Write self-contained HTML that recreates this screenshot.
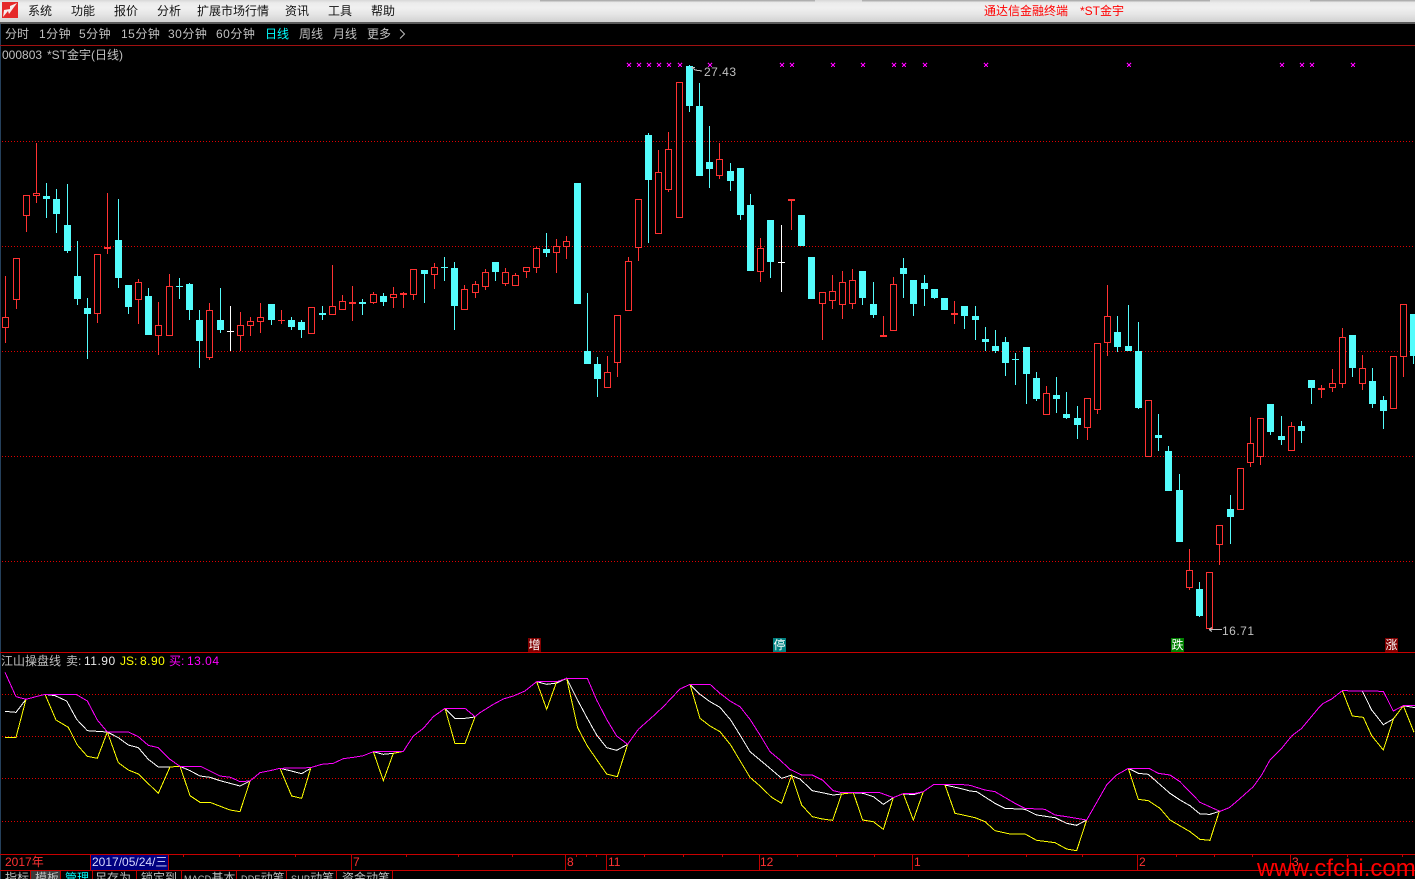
<!DOCTYPE html>
<html lang="zh">
<head>
<meta charset="utf-8">
<title>通达信金融终端 *ST金宇</title>
<style>
html,body{margin:0;padding:0;background:#000;}
#r{position:relative;width:1415px;height:879px;overflow:hidden;background:#000;font:12px/14px "Liberation Sans","WenQuanYi Zen Hei","Noto Sans CJK SC",sans-serif;color:#c0c0c0;}
#r span,#r div{position:absolute;white-space:nowrap;}
#r small{font-size:9px;letter-spacing:.2px;}
#bar{left:0;top:0;width:1415px;height:22px;background:linear-gradient(#d8d8d8 0,#ececec 3px,#f0f0f0 8px,#e6e6e6 14px,#d4d4d4 21px);border-bottom:2px solid #5a5a5a;color:#111;}
#bar span{top:4px;}
.sh{top:0;height:2px;background:linear-gradient(#a0a0a0,#dcdcdc);}
.t{top:27px;}
.n{letter-spacing:.5px;}
.b{top:871px;}
.d{top:855px;color:#ff3232;}
.g{top:638px;width:13px;height:14px;color:#fff;text-align:center;line-height:14px;}
svg{position:absolute;left:0;top:0;}
</style>
</head>
<body>
<div id="r">
<svg width="1415" height="879" viewBox="0 0 1415 879" shape-rendering="crispEdges" fill="none">
<path d="M.5 24V879" stroke="#25405c"/>
<path d="M0 45.5H1415" stroke="#a01010"/>
<path d="M0 652.5H1415M0 854.5H1415M0 870.5H1415" stroke="#c80000"/>
<path d="M2 141.5H1415M2 246.5H1415M2 351.5H1415M2 456.5H1415M2 561.5H1415M2 694.5H1415M2 736.5H1415M2 778.5H1415M2 821.5H1415" stroke="#e00000" stroke-dasharray="1 2"/>

<path stroke="#ff3232" d="M5.5 276V343M16.5 258V309M26.5 195V232M36.5 143V203M97.5 254V323M107.5 193V254M138.5 279V324M158.5 302V355M169.5 274V336M209.5 303V360M240.5 312V351M250.5 317V336M260.5 303V333M281.5 310V324M311.5 307V334M332.5 265V315M342.5 295V310M352.5 286V321M373.5 292V304M393.5 287V308M403.5 292V308M413.5 269V300M434.5 263V289M464.5 285V310M475.5 281V298M485.5 269V290M505.5 268V286M515.5 273V286M526.5 267V278M536.5 247V273M556.5 239V273M566.5 236V259M607.5 356V388M617.5 315V377M628.5 257V311M638.5 199V261M658.5 150V234M668.5 132V192M679.5 82V218M719.5 143V179M760.5 238V282M791.5 200V230M822.5 292V340M832.5 275V309M842.5 271V319M852.5 269V309M883.5 316V337M893.5 277V331M954.5 301V324M1046.5 386V415M1087.5 398V440M1097.5 343V414M1107.5 285V356M1148.5 400V457M1189.5 549V590M1209.5 572V629M1219.5 525V565M1240.5 468V510M1250.5 417V467M1260.5 418V465M1291.5 422V451M1321.5 385V398M1332.5 369V392M1342.5 328V388M1362.5 355V390M1393.5 356V409M1403.5 304V377"/>
<path stroke="#ff3232" stroke-width="7" d="M5.5 317V328M16.5 258V300M26.5 195V216M36.5 193V196M97.5 254V314M138.5 282V300M158.5 325V336M169.5 286V336M209.5 310V358M240.5 325V336M250.5 321V326M260.5 317V322M311.5 307V334M332.5 306V315M342.5 301V310M373.5 294V303M393.5 294V298M413.5 269V295M434.5 267V275M464.5 289V310M475.5 284V293M485.5 272V287M505.5 272V284M515.5 275V286M526.5 267V272M536.5 248V268M556.5 246V253M566.5 241V247M607.5 372V388M617.5 315V363M628.5 261V311M638.5 199V248M658.5 172V234M668.5 149V190M679.5 82V218M719.5 159V176M760.5 248V272M822.5 292V304M832.5 291V301M842.5 282V305M852.5 280V304M893.5 284V331M1046.5 393V415M1087.5 398V428M1097.5 343V410M1107.5 316V343M1148.5 400V457M1189.5 570V588M1209.5 572V629M1219.5 525V545M1240.5 468V510M1250.5 443V463M1260.5 418V457M1291.5 426V451M1332.5 383V388M1342.5 337V384M1362.5 368V384M1393.5 356V409M1403.5 304V357M107.5 247V249M281.5 320V321M352.5 302V304M403.5 293V295M791.5 199V201M883.5 335V337M954.5 313V315M1321.5 388V390"/>
<path stroke="#000" stroke-width="5" d="M5.5 318V327M16.5 259V299M26.5 196V215M36.5 194V195M97.5 255V313M138.5 283V299M158.5 326V335M169.5 287V335M209.5 311V357M240.5 326V335M250.5 322V325M260.5 318V321M311.5 308V333M332.5 307V314M342.5 302V309M373.5 295V302M393.5 295V297M413.5 270V294M434.5 268V274M464.5 290V309M475.5 285V292M485.5 273V286M505.5 273V283M515.5 276V285M526.5 268V271M536.5 249V267M556.5 247V252M566.5 242V246M607.5 373V387M617.5 316V362M628.5 262V310M638.5 200V247M658.5 173V233M668.5 150V189M679.5 83V217M719.5 160V175M760.5 249V271M822.5 293V303M832.5 292V300M842.5 283V304M852.5 281V303M893.5 285V330M1046.5 394V414M1087.5 399V427M1097.5 344V409M1107.5 317V342M1148.5 401V456M1189.5 571V587M1209.5 573V628M1219.5 526V544M1240.5 469V509M1250.5 444V462M1260.5 419V456M1291.5 427V450M1332.5 384V387M1342.5 338V383M1362.5 369V383M1393.5 357V408M1403.5 305V356"/>

<path stroke="#54fcfc" d="M46.5 183V218M56.5 189V233M67.5 184V253M77.5 241V305M87.5 298V359M118.5 199V288M128.5 285V314M148.5 288V335M179.5 278V299M189.5 283V320M199.5 310V368M220.5 288V333M271.5 304V325M291.5 317V330M301.5 320V338M322.5 306V320M362.5 299V315M383.5 293V306M424.5 270V303M444.5 257V281M454.5 262V330M495.5 262V281M546.5 233V257M587.5 293V364M597.5 357V397M648.5 133V243M689.5 65V112M699.5 83V176M709.5 126V188M730.5 163V191M740.5 168V220M750.5 194V271M770.5 220V278M862.5 271V305M873.5 282V318M903.5 258V298M913.5 280V316M924.5 275V306M934.5 289V299M964.5 306V329M975.5 306V340M985.5 327V351M995.5 330V353M1005.5 337V376M1015.5 353V385M1026.5 347V404M1036.5 372V401M1056.5 377V413M1066.5 392V419M1077.5 406V439M1117.5 316V352M1128.5 305V351M1138.5 322V409M1158.5 414V451M1168.5 446V491M1179.5 474V542M1199.5 582V617M1230.5 495V544M1270.5 404V435M1281.5 416V445M1301.5 421V443M1311.5 380V404M1352.5 335V377M1372.5 368V408M1383.5 396V429M1413.5 314V364"/>
<path stroke="#54fcfc" stroke-width="7" d="M46.5 196V199M56.5 199V214M67.5 225V251M77.5 276V299M87.5 308V314M118.5 240V278M128.5 285V307M148.5 296V335M179.5 286V287M189.5 284V310M199.5 320V341M220.5 320V330M271.5 304V320M291.5 320V327M301.5 322V330M322.5 313V315M362.5 302V304M383.5 296V302M424.5 270V274M444.5 267V268M454.5 268V306M495.5 262V272M546.5 249V253M577.5 183V304M587.5 351V364M597.5 364V379M648.5 135V180M689.5 66V106M699.5 106V176M709.5 162V169M730.5 171V181M740.5 168V215M750.5 205V271M770.5 220V262M801.5 215V246M811.5 257V299M862.5 271V298M873.5 304V315M903.5 268V274M913.5 280V304M924.5 283V289M934.5 289V298M944.5 298V310M964.5 306V316M975.5 316V320M985.5 339V342M995.5 346V351M1005.5 342V363M1015.5 359V360M1026.5 347V374M1036.5 378V399M1056.5 395V399M1066.5 414V418M1077.5 418V425M1117.5 332V347M1128.5 346V351M1138.5 351V408M1158.5 435V438M1168.5 451V491M1179.5 490V542M1199.5 589V616M1230.5 509V517M1270.5 404V432M1281.5 436V440M1301.5 426V431M1311.5 380V388M1352.5 335V368M1372.5 381V404M1383.5 400V411M1413.5 314V356"/>
<path stroke="#fff" d="M230.5 306V351M781.5 225V292M227 331.5H234M778 262.5H785"/>

<path stroke="#ff00ff" d="M627 63l4 4m0-4l-4 4M637 63l4 4m0-4l-4 4M647 63l4 4m0-4l-4 4M657 63l4 4m0-4l-4 4M667 63l4 4m0-4l-4 4M678 63l4 4m0-4l-4 4M708 63l4 4m0-4l-4 4M780 63l4 4m0-4l-4 4M790 63l4 4m0-4l-4 4M831 63l4 4m0-4l-4 4M861 63l4 4m0-4l-4 4M892 63l4 4m0-4l-4 4M902 63l4 4m0-4l-4 4M923 63l4 4m0-4l-4 4M984 63l4 4m0-4l-4 4M1127 63l4 4m0-4l-4 4M1280 63l4 4m0-4l-4 4M1300 63l4 4m0-4l-4 4M1310 63l4 4m0-4l-4 4M1351 63l4 4m0-4l-4 4"/>
<path stroke="#c0c0c0" d="M692 67.5l3 2.5l7 1M691 67.5h4M1209 629.5h13M1209 629.5l3-2M1209 629.5l3 2"/>
<path stroke="#c0c0c0" shape-rendering="auto" d="M400 29.5l4.5 4.5l-4.5 4.5"/>

<g stroke="#c00000">
<path d="M183.5 855V857M239.5 855V857M295.5 855V857M406.5 855V857M458.5 855V857M512.5 855V857M576.5 855V857M586.5 855V857M596.5 855V857M644.5 855V857M683.5 855V857M722.5 855V857M797.5 855V857M836.5 855V857M874.5 855V857M968.5 855V857M1026.5 855V857M1082.5 855V857M1176.5 855V857M1214.5 855V857M1252.5 855V857M1347.5 855V857M1402.5 855V857"/>
<path d="M351.5 855V870M565.5 855V870M606.5 855V870M759.5 855V870M912.5 855V870M1137.5 855V870M1290.5 855V870"/>
<path d="M30.5 871V879M60.5 871V879M92.5 871V879M136.5 871V879M181.5 871V879M236.5 871V879M286.5 871V879M336.5 871V879M392.5 871V879"/>
</g>
<rect x="91" y="855" width="77" height="15" fill="#000080" stroke="none"/>
<path d="M90.5 855V870M168.5 855V870" stroke="#c80000"/>
<rect x="31" y="871" width="29" height="8" fill="#3a3a3a" stroke="none"/>

<g transform="translate(0 640) scale(.33333)" stroke-width="3">
<g stroke="#fff">
<polyline points="15,214 48,217 78,178"/>
<polyline points="135,163 165,167 200,183 230,238 262,272 322,276 355,293 385,315 415,323 445,358 475,381 510,381 540,379 570,392 600,408 630,412 660,422 720,438 750,423"/>
<polyline points="840,385 870,392 905,401 932,385"/>
<polyline points="1120,335 1150,343 1180,340 1210,334"/>
<polyline points="1335,205 1365,235 1395,235 1425,231"/>
<polyline points="1610,125 1640,133 1670,129 1700,115 1730,175 1762,235 1790,285 1820,323 1850,331 1883,313"/>
<polyline points="2070,133 2100,163 2130,185 2160,202 2192,240 2220,285 2250,335 2280,360 2310,385 2345,415 2372,406 2400,417 2437,452 2500,465 2525,462 2560,458 2590,460 2620,470 2650,493 2680,473"/>
<polyline points="2710,461 2740,464 2770,455"/>
<polyline points="2835,435 2880,445 2910,453 2930,455 2985,490 3015,505 3075,508 3110,525 3165,533 3200,550 3230,556 3260,540"/>
<polyline points="3385,385 3415,400 3445,403 3510,460 3540,480 3570,497 3600,522 3630,523 3658,514"/>
<polyline points="4027,152 4087,153 4115,210 4150,254 4180,237 4210,197 4245,203"/>
</g>
<g stroke="#ffff00">
<polyline points="15,292 48,292 78,178"/>
<polyline points="135,163 168,240 205,262 232,315 262,349 292,355 322,276 355,368 385,390 415,402 475,460 510,381 540,379 570,467 600,487 630,487 690,510 720,515 750,423"/>
<polyline points="840,385 875,468 905,475 932,385"/>
<polyline points="1120,335 1150,422 1180,340 1210,334"/>
<polyline points="1335,205 1365,311 1395,311 1425,231"/>
<polyline points="1610,125 1640,208 1670,125 1700,115 1733,263 1762,318 1820,402 1852,410 1883,313"/>
<polyline points="2070,133 2100,235 2130,258 2160,275 2192,315 2220,362 2250,412 2280,438 2315,472 2345,490 2375,406 2405,495 2437,530 2467,537 2498,541 2525,462 2560,458 2588,540 2620,545 2650,568 2680,473 2710,461 2740,540 2770,455"/>
<polyline points="2835,435 2865,520 2880,523 2925,533 2955,545 2985,572 3030,582 3075,582 3110,601 3165,608 3200,627 3230,632 3260,540"/>
<polyline points="3385,385 3415,478 3445,482 3480,505 3510,540 3570,575 3600,598 3630,601 3658,514"/>
<polyline points="4027,152 4057,228 4090,232 4115,287 4150,330 4180,237 4210,197 4242,277"/>
</g>
<polyline stroke="#ff00ff" points="15,97 48,170 78,178 108,170 135,163 228,163 262,183 292,240 322,276 385,276 415,290 445,316 475,323 510,358 540,379 602,379 630,393 660,408 692,412 720,425 750,423 780,398 810,392 840,385 932,383 965,373 1000,370 1030,356 1060,352 1090,347 1120,335 1210,334 1240,288 1270,265 1300,230 1335,205 1395,205 1425,230 1440,218 1480,193 1510,177 1540,168 1575,153 1610,125 1670,125 1700,115 1762,115 1790,180 1820,238 1850,288 1883,313 1915,268 1960,228 1990,200 2040,147 2070,133 2130,133 2160,160 2190,183 2220,200 2250,238 2280,285 2310,335 2340,360 2370,388 2405,405 2437,405 2467,420 2500,452 2525,458 2637,457 2680,473 2710,461 2740,461 2770,455 2802,433 2880,433 2910,436 2955,450 2985,455 3045,490 3075,505 3135,508 3165,525 3200,530 3260,540 3320,435 3350,405 3385,385 3447,385 3475,400 3510,405 3540,425 3600,487 3660,514 3688,503 3715,480 3760,440 3785,405 3810,360 3845,325 3875,288 3905,265 3955,205 3970,190 3995,177 4027,152 4150,154 4180,213 4210,197 4245,197"/>
</g>
</svg>

<div id="bar">
<div class="sh" style="left:540px;width:275px"></div>
<div class="sh" style="left:862px;width:348px"></div>
<div class="sh" style="left:1310px;width:105px"></div>
<svg width="18" height="18" viewBox="0 0 18 18" style="left:2px;top:2px"><rect x="0" y="0" width="16" height="16" fill="#e52a2a"/><path d="M1 15L6 9L7 12L15 1L8 4L8 7L2 8Z" fill="#f6eeee"/></svg>
<span style="left:28px">系统</span><span style="left:71px">功能</span><span style="left:114px">报价</span><span style="left:157px">分析</span><span style="left:197px">扩展市场行情</span><span style="left:285px">资讯</span><span style="left:328px">工具</span><span style="left:371px">帮助</span>
<span style="left:984px;color:#f00">通达信金融终端</span><span style="left:1080px;color:#f00">*ST金宇</span>
</div>

<span class="t" style="left:5px">分时</span><span class="t n" style="left:39px">1分钟</span><span class="t n" style="left:79px">5分钟</span><span class="t n" style="left:121px">15分钟</span><span class="t n" style="left:168px">30分钟</span><span class="t n" style="left:216px">60分钟</span><span class="t" style="left:265px;color:#00ffff">日线</span><span class="t" style="left:299px">周线</span><span class="t" style="left:333px">月线</span><span class="t" style="left:367px">更多</span>

<span style="left:2px;top:48px">000803</span><span style="left:47px;top:48px">*ST金宇(日线)</span>
<span class="n" style="left:704px;top:65px">27.43</span>
<span class="n" style="left:1222px;top:624px">16.71</span>

<div class="g" style="left:528px;background:#800000">增</div>
<div class="g" style="left:773px;background:#008080">停</div>
<div class="g" style="left:1171px;background:#008000">跌</div>
<div class="g" style="left:1385px;background:#800000">涨</div>

<span style="left:1px;top:654px">江山操盘线</span>
<span style="left:66px;top:654px">卖:</span><span class="n" style="left:84px;top:654px;color:#e8e8e8">11.90</span>
<span style="left:120px;top:654px;color:#ff0">JS:</span><span class="n" style="left:140px;top:654px;color:#ff0">8.90</span>
<span style="left:169px;top:654px;color:#f0f">买:</span><span class="n" style="left:187px;top:654px;color:#f0f">13.04</span>

<span class="d" style="left:5px">2017年</span>
<span class="d" style="left:92px;color:#d8d8ff">2017/05/24/三</span>
<span class="d" style="left:353px">7</span><span class="d" style="left:567px">8</span><span class="d" style="left:608px">11</span><span class="d" style="left:760px">12</span><span class="d" style="left:914px">1</span><span class="d" style="left:1139px">2</span><span class="d" style="left:1292px">3</span>

<span class="b" style="left:5px">指标</span><span class="b" style="left:35px">模板</span><span class="b" style="left:65px;color:#00ffff">管理</span><span class="b" style="left:95px">足存为</span><span class="b" style="left:141px">锁定到</span><span class="b" style="left:184px"><small>MACD</small>基本</span><span class="b" style="left:241px"><small>DDE</small>动笔</span><span class="b" style="left:291px"><small>SUP</small>动笔</span><span class="b" style="left:342px">资金动笔</span>

<span style="left:1257px;top:855px;font-size:24px;line-height:28px;color:#f00">www.cfchi.com</span>
</div>
</body>
</html>
